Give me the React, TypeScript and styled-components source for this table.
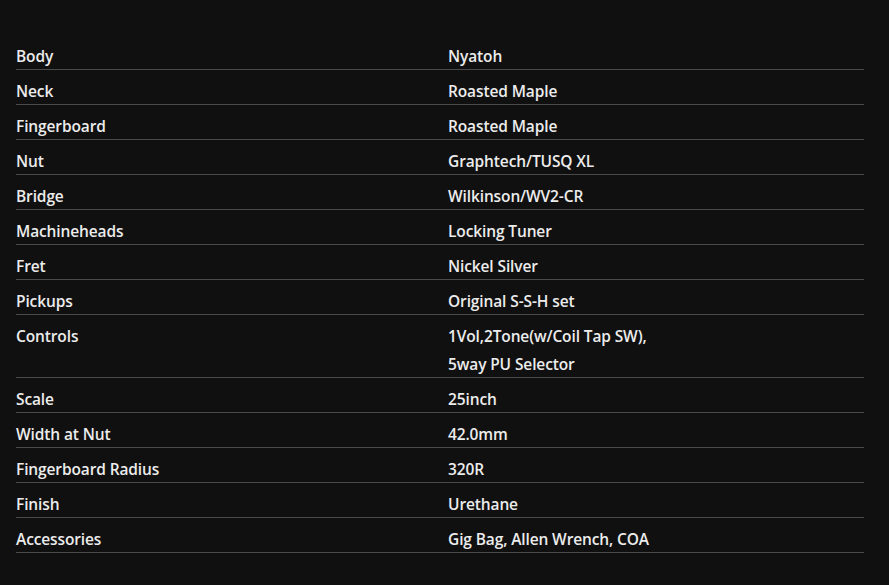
import React from "react";
import styled, { createGlobalStyle } from "styled-components";

const Global = createGlobalStyle`
  html, body { margin: 0; padding: 0; background: #101010; }
  body { font-family: "Open Sans", "Noto Sans", "Noto Sans CJK JP", sans-serif; }
`;

const Page = styled.div`
  width: 889px;
  height: 585px;
  box-sizing: border-box;
  padding: 35px 25px 0 16px;
  background: #101010;
  overflow: hidden;
`;

const Spec = styled.dl`
  margin: 0;
  display: grid;
  grid-template-columns: 432px 1fr;
`;

const Cell = styled.div`
  margin: 0;
  padding: 7px 0 0;
  font-size: 15.5px;
  font-weight: 600;
  color: #ececec;
  border-bottom: 1px solid #4a4a4a;
  letter-spacing: -0.12px;
`;

const Line = styled.span`
  display: block;
  line-height: 28px;
  &:last-child {
    margin-bottom: -1px;
  }
`;

const Term = styled(Cell).attrs({ as: "dt" })``;
const Desc = styled(Cell).attrs({ as: "dd" })``;

const rows: [string, string[]][] = [
  ["Body", ["Nyatoh"]],
  ["Neck", ["Roasted Maple"]],
  ["Fingerboard", ["Roasted Maple"]],
  ["Nut", ["Graphtech/TUSQ XL"]],
  ["Bridge", ["Wilkinson/WV2-CR"]],
  ["Machineheads", ["Locking Tuner"]],
  ["Fret", ["Nickel Silver"]],
  ["Pickups", ["Original S-S-H set"]],
  ["Controls", ["1Vol,2Tone(w/Coil Tap SW),", "5way PU Selector"]],
  ["Scale", ["25inch"]],
  ["Width at Nut", ["42.0mm"]],
  ["Fingerboard Radius", ["320R"]],
  ["Finish", ["Urethane"]],
  ["Accessories", ["Gig Bag, Allen Wrench, COA"]],
];

export default function App() {
  return (
    <Page>
      <Global />
      <Spec>
        {rows.map(([k, v]) => (
          <React.Fragment key={k}>
            <Term>
              <Line>{k}</Line>
            </Term>
            <Desc>
              {v.map((line, i) => (
                <Line key={i}>{line}</Line>
              ))}
            </Desc>
          </React.Fragment>
        ))}
      </Spec>
    </Page>
  );
}
